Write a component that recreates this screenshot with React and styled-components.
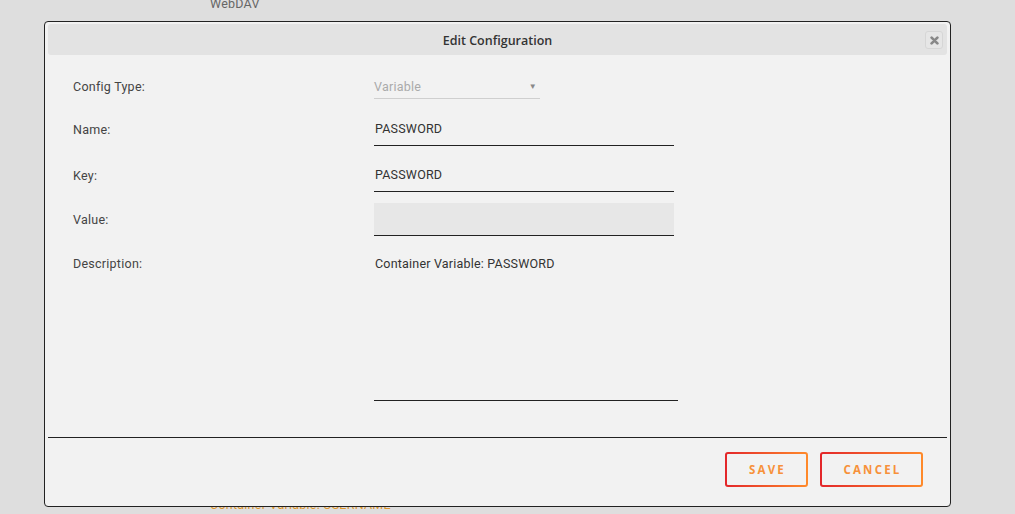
import React from "react";
import styled, { createGlobalStyle } from "styled-components";

const Global = createGlobalStyle`
  html, body { margin: 0; padding: 0; }
  body {
    background: #dedede;
    font-family: Roboto, "Noto Sans", sans-serif;
    width: 1015px;
    height: 514px;
    overflow: hidden;
  }
`;

const Page = styled.div`
  height: 514px;
  display: flex;
  flex-direction: column;
  justify-content: space-between;
  padding-left: 210px;
  box-sizing: border-box;
`;

const PageText = styled.div`
  font-size: 12.5px;
  letter-spacing: 0.25px;
  line-height: 14px;
  color: ${(p) => p.$color || "#666"};
  margin-top: ${(p) => p.$mt || "0"};
  margin-bottom: ${(p) => p.$mb || "0"};
`;

const Dialog = styled.div`
  position: fixed;
  left: 44px;
  top: 21px;
  width: 907px;
  height: 486px;
  box-sizing: border-box;
  border: 1px solid #222;
  border-radius: 4px;
  background: #f2f2f2;
  padding: 2px 3px 0;
  display: flex;
  flex-direction: column;
`;

const Header = styled.div`
  height: 31px;
  background: #e3e3e3;
  border-radius: 3px;
  display: flex;
  align-items: center;
  justify-content: center;
  position: relative;
`;

const Title = styled.div`
  font-family: "Open Sans", sans-serif;
  font-weight: 600;
  font-size: 12.5px;
  color: #333;
  padding-top: 2px;
`;

const CloseButton = styled.button`
  position: absolute;
  right: 4px;
  top: 7px;
  width: 18px;
  height: 18px;
  padding: 0;
  border: 1px solid #d6d6d6;
  border-radius: 3px;
  background: #e6e6e6;
  display: flex;
  align-items: center;
  justify-content: center;
`;

const Body = styled.div`
  padding: 19px 0 0 25px;
  display: flex;
  flex-direction: column;
`;

const Row = styled.div`
  display: grid;
  grid-template-columns: 301px auto;
  align-items: ${(p) => (p.$top ? "start" : "center")};
  margin-bottom: ${(p) => p.$mb || "13px"};
`;

const Label = styled.div`
  font-size: 12.5px;
  letter-spacing: 0.25px;
  line-height: 14px;
  color: #444;
  padding-top: ${(p) => p.$pt || "0"};
`;

const Select = styled.div`
  width: 166px;
  height: 25px;
  box-sizing: border-box;
  border-bottom: 1px solid #cfcfcf;
  display: flex;
  align-items: center;
  justify-content: space-between;
  padding: 0 3px 0 0;
  font-size: 12.5px;
  letter-spacing: 0.25px;
  color: #aaa;
`;

const Arrow = styled.span`
  font-size: 8px;
  color: #888;
`;

const Field = styled.div`
  width: ${(p) => p.$w || "300px"};
  height: ${(p) => p.$h || "33px"};
  box-sizing: border-box;
  border-bottom: 1px solid #222;
  background: ${(p) => p.$bg || "transparent"};
  font-size: 12.5px;
  letter-spacing: 0.2px;
  line-height: 14px;
  color: #333;
  display: flex;
  align-items: ${(p) => (p.$top ? "flex-start" : "center")};
  padding: ${(p) => (p.$top ? "8px 1px 0" : "0 1px")};
`;

const Spacer = styled.div`
  flex: 1;
`;

const Divider = styled.div`
  height: 1px;
  background: #222;
`;

const Footer = styled.div`
  display: flex;
  justify-content: flex-end;
  gap: 12px;
  padding: 14px 24px 19px 0;
`;

const Button = styled.button`
  width: ${(p) => p.$w};
  height: 35px;
  border: 2px solid transparent;
  border-radius: 3px;
  background: linear-gradient(#f2f2f2, #f2f2f2) padding-box,
    linear-gradient(90deg, #e3262a, #ff8a2a) border-box;
  font-family: "Open Sans", sans-serif;
  font-weight: 700;
  font-size: 11.5px;
  letter-spacing: 2.2px;
  color: #f7913a;
  padding: 0 0 1px 2px;
`;

function CloseIcon() {
  return (
    <svg width="9" height="9" viewBox="0 0 10 10">
      <path d="M1.8 1.8 L8.2 8.2 M8.2 1.8 L1.8 8.2" stroke="#888" strokeWidth="3" strokeLinecap="round" />
    </svg>
  );
}

export default function App() {
  return (
    <>
      <Global />
      <Page>
        <PageText $mt="-3px">WebDAV</PageText>
        <PageText $color="#e0962c" $mb="2px">Container Variable: USERNAME</PageText>
      </Page>
      <Dialog>
        <Header>
          <Title>Edit Configuration</Title>
          <CloseButton aria-label="close">
            <CloseIcon />
          </CloseButton>
        </Header>
        <Body>
          <Row $mb="14px">
            <Label>Config Type:</Label>
            <Select>
              <span>Variable</span>
              <Arrow>▼</Arrow>
            </Select>
          </Row>
          <Row>
            <Label>Name:</Label>
            <Field>PASSWORD</Field>
          </Row>
          <Row $mb="11px">
            <Label>Key:</Label>
            <Field>PASSWORD</Field>
          </Row>
          <Row>
            <Label>Value:</Label>
            <Field $bg="#e7e7e7" />
          </Row>
          <Row $top $mb="0">
            <Label $pt="8px">Description:</Label>
            <Field $top $h="152px" $w="304px">
              Container Variable: PASSWORD
            </Field>
          </Row>
        </Body>
        <Spacer />
        <Divider />
        <Footer>
          <Button $w="83px">SAVE</Button>
          <Button $w="103px">CANCEL</Button>
        </Footer>
      </Dialog>
    </>
  );
}
